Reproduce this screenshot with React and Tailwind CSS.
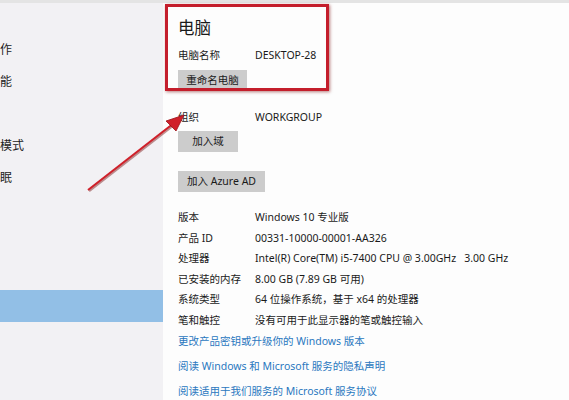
import React from "react";

const sideItems = [
  { label: "作" },
  { label: "能" },
  { label: "" },
  { label: "模式" },
  { label: "眠" },
  { label: "" },
  { label: "" },
  { label: "" },
  { label: "", active: true },
];

const specs = [
  ["版本", "Windows 10 专业版"],
  ["产品 ID", "00331-10000-00001-AA326"],
  ["处理器", "Intel(R) Core(TM) i5-7400 CPU @ 3.00GHz   3.00 GHz"],
  ["已安装的内存", "8.00 GB (7.89 GB 可用)"],
  ["系统类型", "64 位操作系统，基于 x64 的处理器"],
  ["笔和触控", "没有可用于此显示器的笔或触控输入"],
];

const links = [
  "更改产品密钥或升级你的 Windows 版本",
  "阅读 Windows 和 Microsoft 服务的隐私声明",
  "阅读适用于我们服务的 Microsoft 服务协议",
];

function GrayButton({ children, width }) {
  return (
    <div className={`h-[21px] ${width} bg-[#cccccc] flex items-center justify-center text-[10.5px] text-[#1a1a1a]`}>
      {children}
    </div>
  );
}

export default function App() {
  return (
    <div
      className="relative w-[569px] h-[400px] overflow-hidden bg-[#fdfdfd] text-[#1a1a1a]"
      style={{ fontFamily: '"Noto Sans", "Noto Sans CJK SC", sans-serif' }}
    >
      {/* window top edge */}
      <div className="h-[3px] bg-[#e4e4e4]" />

      <div className="flex h-[397px]">
        {/* Sidebar, cut off at the left */}
        <div className="w-[163px] shrink-0 bg-[#f2f1f4] pt-[31px]">
          {sideItems.map((item, i) => (
            <div
              key={i}
              className={`h-[32px] flex items-center text-[12px] text-[#222] ${item.active ? "bg-[#92bfe6]" : ""}`}
            >
              {item.label}
            </div>
          ))}
        </div>

        {/* Main content */}
        <div className="flex-1 pl-[15px] text-[10.5px]">
          <div className="pt-[15px] text-[16.5px] leading-[20px]">电脑</div>

          <div className="mt-[8px] h-[20px] flex items-center">
            <span className="w-[77px]">电脑名称</span>
            <span>DESKTOP-28</span>
          </div>
          <div className="mt-[4px]">
            <GrayButton width="w-[69px]">重命名电脑</GrayButton>
          </div>

          <div className="mt-[16px] h-[21px] flex items-center">
            <span className="w-[77px]">组织</span>
            <span>WORKGROUP</span>
          </div>
          <div className="mt-[3px]">
            <GrayButton width="w-[60px]">加入域</GrayButton>
          </div>
          <div className="mt-[19px]">
            <GrayButton width="w-[87px]">加入 Azure AD</GrayButton>
          </div>

          <div className="mt-[16px]">
            {specs.map(([k, v]) => (
              <div key={k} className="h-[20.5px] flex items-center whitespace-pre">
                <span className="w-[77px] shrink-0">{k}</span>
                <span>{v}</span>
              </div>
            ))}
          </div>

          <div className="-mt-[1.5px]">
            {links.map((l) => (
              <div key={l} className="h-[25px] flex items-center text-[#2a78bf]">
                {l}
              </div>
            ))}
          </div>
        </div>
      </div>

      {/* Annotation: red box */}
      <div className="absolute left-[165px] top-[4px] w-[164px] h-[87px] border-[3px] border-[#c41e2c] shadow-[1px_1px_3px_rgba(120,0,0,0.5)]" />

      {/* Annotation: arrow */}
      <svg className="absolute left-0 top-0" width="569" height="400" viewBox="0 0 569 400">
        <line x1="88" y1="190" x2="174" y2="123" stroke="#7a1010" strokeWidth="2.5" opacity="0.45" transform="translate(1 1)" />
        <line x1="88" y1="190" x2="174" y2="123" stroke="#d0202a" strokeWidth="2" />
        <polygon points="184,115 166,121 176,131" fill="#d0202a" stroke="#9a1018" strokeWidth="0.8" />
      </svg>
    </div>
  );
}
